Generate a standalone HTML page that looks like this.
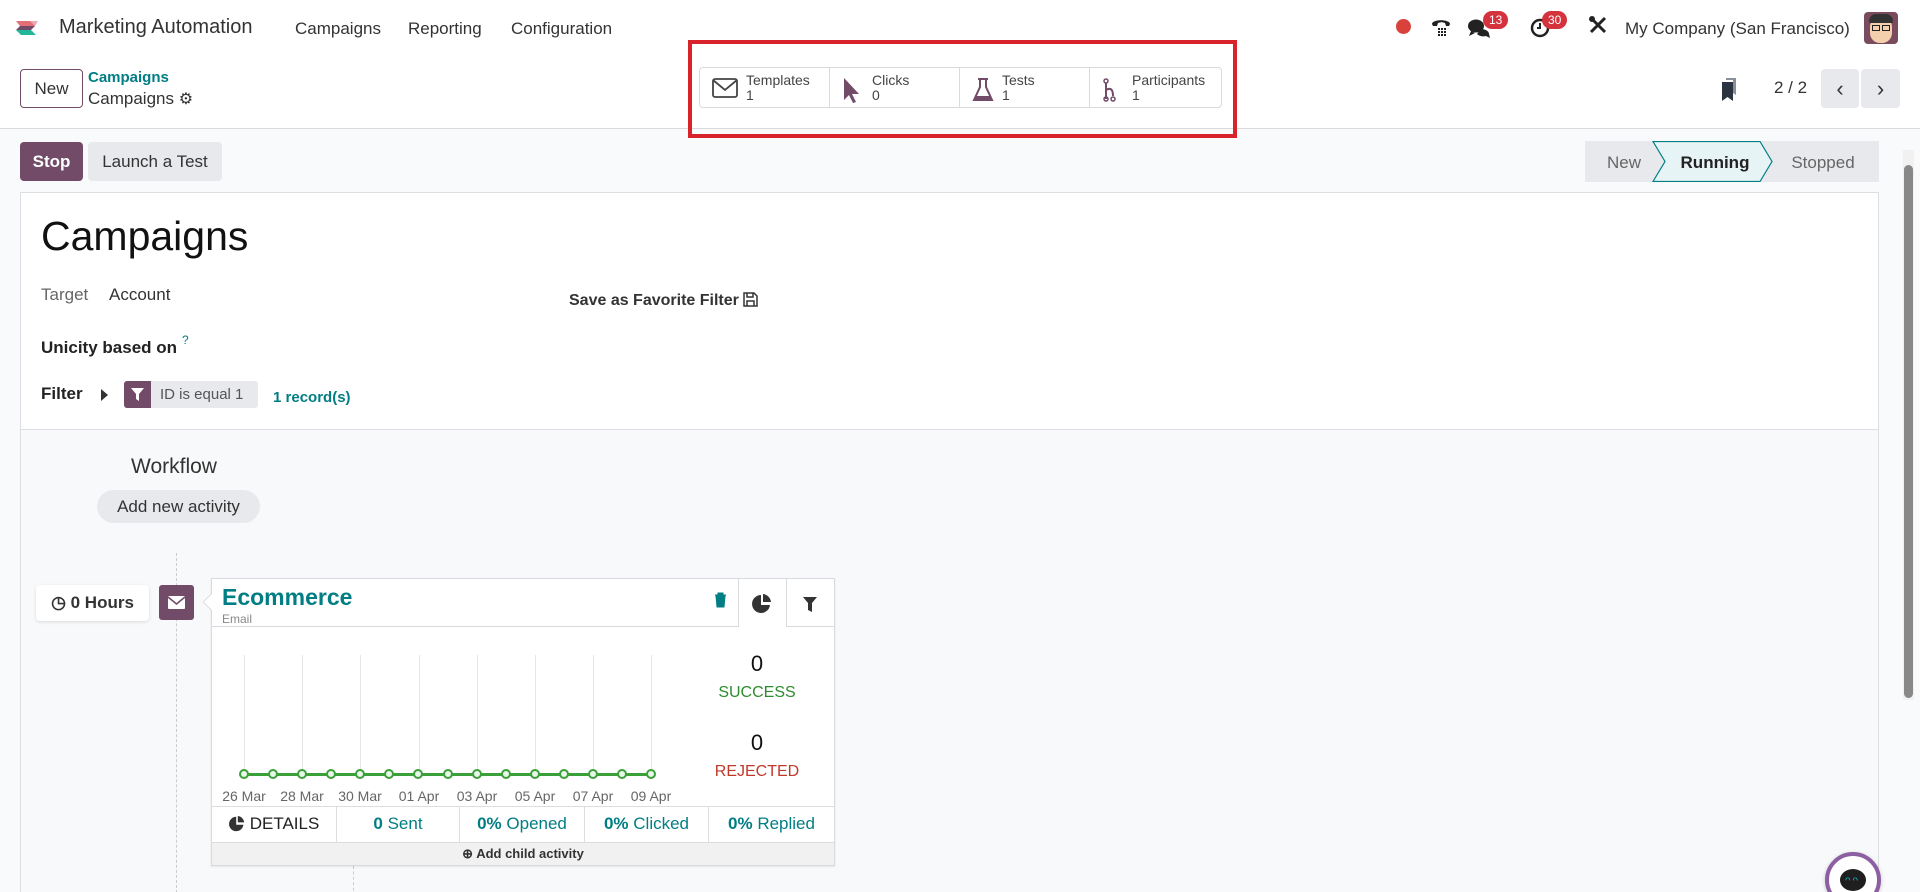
<!DOCTYPE html>
<html style="width:1920px;height:892px;overflow:hidden"><head><meta charset="utf-8"><style>
*{box-sizing:border-box;margin:0;padding:0}
body{width:1920px;height:892px;overflow:hidden;background:#f9fafb;font-family:"Liberation Sans",sans-serif;color:#212529;position:relative;font-size:16px}
.a{position:absolute;white-space:nowrap}
.top{position:absolute;left:0;top:0;width:1920px;height:129px;background:#fff;border-bottom:1px solid #d8dadd}
.teal{color:#017e84}
.btn{position:absolute;border-radius:4px;display:flex;align-items:center;justify-content:center;font-size:17px}
.stat{position:absolute;top:67px;height:41px;width:131px;border:1px solid #d8dadd;background:#fff;font-size:14px;line-height:15px;color:#444}
.stat svg{position:absolute;left:12px;top:10px}
.stat span{position:absolute;left:46px;top:5px}
.vl{position:absolute;top:655px;width:1px;height:119px;background:#e6e6e6}
.dt{position:absolute;top:788px;font-size:14px;color:#666;width:60px;text-align:center}
.dot{position:absolute;top:769px;width:10px;height:10px;border-radius:50%;border:2px solid #3aa03a;background:#e9f6e9}
.cell{position:absolute;top:806px;height:36px;border-right:1px solid #ddd;display:flex;align-items:center;justify-content:center;font-size:17px;color:#017e84}
</style></head><body>
<div class="top"></div>
<svg class="a" style="left:14px;top:17px" width="28" height="22" viewBox="0 0 28 22"><path d="M2 4h14l5 5H6z" fill="#e46f78"/><path d="M6 9h15l-4 4H2z" fill="#714b67"/><path d="M2 13h15l5 5H7z" fill="#21b799"/><path d="M10 4h14l-3 5" fill="#e46f78" opacity=".6"/></svg>
<div class="a" style="left:59px;top:16px;font-size:20px;color:#333">Marketing Automation</div>
<div class="a" style="left:295px;top:19px;font-size:17px;color:#333">Campaigns</div>
<div class="a" style="left:408px;top:19px;font-size:17px;color:#333">Reporting</div>
<div class="a" style="left:511px;top:19px;font-size:17px;color:#333">Configuration</div>
<div class="a" style="left:1396px;top:19px;width:15px;height:15px;border-radius:50%;background:#d9423b"></div>
<svg class="a" style="left:1430px;top:16px" width="22" height="22" viewBox="0 0 22 22"><path d="M2 8c0-5 18-5 18 0l-1 2h-3l-1-3c-3-1-4-1-7 0l-1 3H3z" fill="#222"/><g fill="#222"><rect x="8" y="12" width="2" height="2"/><rect x="11" y="12" width="2" height="2"/><rect x="14" y="12" width="2" height="2"/><rect x="8" y="15" width="2" height="2"/><rect x="11" y="15" width="2" height="2"/><rect x="14" y="15" width="2" height="2"/><rect x="8" y="18" width="2" height="2"/><rect x="11" y="18" width="2" height="2"/><rect x="14" y="18" width="2" height="2"/></g></svg>
<svg class="a" style="left:1467px;top:17px" width="24" height="22" viewBox="0 0 24 22"><ellipse cx="9" cy="9" rx="8" ry="6.5" fill="#222"/><path d="M4 14l-2 5 6-3z" fill="#222"/><path d="M14 12c4 0 8 2 8 5l1 4-4-2c-3 1-7 0-9-2" fill="#222"/></svg>
<div class="a" style="left:1483px;top:11px;background:#d4323c;color:#fff;font-size:12px;border-radius:10px;padding:2px 6px">13</div>
<svg class="a" style="left:1529px;top:16px" width="22" height="22" viewBox="0 0 22 22"><circle cx="11" cy="12" r="8" fill="none" stroke="#222" stroke-width="2.5"/><path d="M11 7v5h-3" stroke="#222" stroke-width="2" fill="none"/></svg>
<div class="a" style="left:1542px;top:11px;background:#d4323c;color:#fff;font-size:12px;border-radius:10px;padding:2px 6px">30</div>
<svg class="a" style="left:1588px;top:15px" width="20" height="20" viewBox="0 0 20 20"><path d="M3 3l14 14M17 3L3 17" stroke="#222" stroke-width="3"/><circle cx="4" cy="4" r="3" fill="#222"/></svg>
<div class="a" style="left:1625px;top:19px;font-size:17px;color:#333">My Company (San Francisco)</div>
<div class="a" style="left:1864px;top:12px;width:34px;height:32px;border-radius:4px;background:#7a4a5e;overflow:hidden"><div style="position:absolute;left:6px;top:5px;width:22px;height:26px;border-radius:10px;background:#f3cfae"></div><div style="position:absolute;left:5px;top:2px;width:24px;height:9px;background:#333;border-radius:8px 8px 2px 2px"></div><div style="position:absolute;left:8px;top:13px;width:8px;height:6px;border:1.5px solid #222"></div><div style="position:absolute;left:18px;top:13px;width:8px;height:6px;border:1.5px solid #222"></div></div>

<div class="btn" style="left:20px;top:69px;width:63px;height:39px;border:1px solid #714b67;background:#fff;color:#333">New</div>
<div class="a teal" style="left:88px;top:69px;font-size:15px;font-weight:bold">Campaigns</div>
<div class="a" style="left:88px;top:89px;font-size:17px;color:#333">Campaigns <span style="font-size:16px">⚙</span></div>

<div class="stat" style="left:699px;border-radius:4px 0 0 4px"><svg width="26" height="20" viewBox="0 0 26 20"><rect x="1" y="1" width="24" height="18" rx="2" fill="none" stroke="#444" stroke-width="1.8"/><path d="M1 2l12 10L25 2" fill="none" stroke="#444" stroke-width="1.8"/></svg><span>Templates<br>1</span></div>
<div class="stat" style="left:829px"><svg width="20" height="26" viewBox="0 0 20 26"><path d="M2 0v22l5-5 4 8 3-1-4-8h7z" fill="#714b67"/></svg><span style="left:42px">Clicks<br>0</span></div>
<div class="stat" style="left:959px"><svg width="22" height="24" viewBox="0 0 22 24"><path d="M6 1h10M8 1v8L2 22h18L14 9V1" fill="none" stroke="#714b67" stroke-width="2"/><path d="M4 18h14l2 4H2z" fill="#714b67"/></svg><span style="left:42px">Tests<br>1</span></div>
<div class="stat" style="left:1089px;width:133px;border-radius:0 4px 4px 0"><svg width="16" height="24" viewBox="0 0 16 24"><circle cx="4" cy="3" r="2" fill="none" stroke="#714b67" stroke-width="1.5"/><path d="M4 5v16M4 12c5-3 7 0 7 6" fill="none" stroke="#714b67" stroke-width="2"/><circle cx="4" cy="21" r="2" fill="none" stroke="#714b67" stroke-width="1.5"/><circle cx="11" cy="21" r="2" fill="none" stroke="#714b67" stroke-width="1.5"/></svg><span style="left:42px">Participants<br>1</span></div>
<div class="a" style="left:688px;top:40px;width:549px;height:98px;border:4px solid #d8232a"></div>

<svg class="a" style="left:1720px;top:78px" width="18" height="24" viewBox="0 0 18 24"><path d="M2 4h11v19l-5.5-4L2 23z" fill="#2b3440"/><path d="M6 0h10v17l-3-2V2H6z" fill="#8a9099"/></svg>
<div class="a" style="left:1774px;top:78px;font-size:17px;color:#333">2 / 2</div>
<div class="btn" style="left:1821px;top:69px;width:38px;height:39px;background:#e7e9ed;font-size:22px;color:#333">‹</div>
<div class="btn" style="left:1861px;top:69px;width:39px;height:39px;background:#e7e9ed;font-size:22px;color:#333">›</div>

<div class="btn" style="left:20px;top:142px;width:63px;height:39px;background:#714b67;color:#fff;font-weight:bold">Stop</div>
<div class="btn" style="left:88px;top:142px;width:134px;height:39px;background:#e7e9ed;color:#333">Launch a Test</div>

<svg class="a" style="left:1585px;top:141px" width="294" height="41" viewBox="0 0 294 41"><rect width="294" height="41" fill="#e7e9ed"/><path d="M68 0.5h107l12 20-12 20H68l12-20z" fill="#e6f4f5" stroke="#017e84" stroke-width="1.2"/><text x="39" y="27" text-anchor="middle" font-family="Liberation Sans" font-size="17" fill="#666">New</text><text x="130" y="27" text-anchor="middle" font-family="Liberation Sans" font-size="17" font-weight="bold" fill="#222">Running</text><text x="238" y="27" text-anchor="middle" font-family="Liberation Sans" font-size="17" fill="#666">Stopped</text></svg>

<div class="a" style="left:1903px;top:150px;width:11px;height:550px;background:#f1f1f1"></div>
<div class="a" style="left:1904px;top:165px;width:9px;height:533px;background:#888;border-radius:5px"></div>

<div class="a" style="left:20px;top:192px;width:1859px;height:700px;border:1px solid #dcdee1;border-bottom:0;background:#f8f9fa"></div>
<div class="a" style="left:21px;top:193px;width:1857px;height:237px;background:#fff;border-bottom:1px solid #dcdee1"></div>
<div class="a" style="left:41px;top:213px;font-size:41px;color:#111">Campaigns</div>
<div class="a" style="left:41px;top:285px;font-size:17px;color:#666">Target</div>
<div class="a" style="left:109px;top:285px;font-size:17px;color:#333">Account</div>
<div class="a" style="left:569px;top:292px;font-size:16px;font-weight:bold;color:#333">Save as Favorite Filter <svg width="15" height="15" viewBox="0 0 15 15" style="vertical-align:-2px"><path d="M1 1h10l3 3v10H1z M4 1v4h6V1 M4 9h7v5H4z" fill="none" stroke="#333" stroke-width="1.5"/></svg></div>
<div class="a" style="left:41px;top:338px;font-size:17px;font-weight:bold;color:#222">Unicity based on</div>
<div class="a teal" style="left:182px;top:333px;font-size:12px">?</div>
<div class="a" style="left:41px;top:384px;font-size:17px;font-weight:bold;color:#222">Filter</div>
<div class="a" style="left:101px;top:389px;width:0;height:0;border-left:7px solid #333;border-top:6px solid transparent;border-bottom:6px solid transparent"></div>
<div class="a" style="left:124px;top:381px;width:134px;height:27px;background:#e7e9ed;border-radius:3px"></div>
<div class="a" style="left:124px;top:381px;width:27px;height:27px;background:#714b67;border-radius:3px 0 0 3px"><svg width="27" height="27" viewBox="0 0 27 27"><path d="M7 7h13l-5 6v7l-3-2v-5z" fill="#fff"/></svg></div>
<div class="a" style="left:160px;top:386px;font-size:15px;color:#555">ID is equal 1</div>
<div class="a teal" style="left:273px;top:389px;font-size:15px;font-weight:bold">1 record(s)</div>

<div class="a" style="left:131px;top:455px;font-size:21px;color:#333">Workflow</div>
<div class="btn" style="left:97px;top:490px;width:163px;height:33px;border-radius:17px;background:#e7e9ed;color:#333">Add new activity</div>

<div class="a" style="left:176px;top:553px;height:340px;border-left:1px dashed #ccc"></div>
<div class="a" style="left:353px;top:866px;height:30px;border-left:1px dashed #ccc"></div>

<div class="btn" style="left:36px;top:585px;width:113px;height:36px;background:#fff;box-shadow:0 1px 3px rgba(0,0,0,.12);font-weight:bold;color:#333">◷ 0 Hours</div>
<div class="a" style="left:159px;top:585px;width:35px;height:35px;background:#714b67;border-radius:3px"><svg width="35" height="35" viewBox="0 0 35 35"><rect x="9" y="11" width="17" height="13" rx="1" fill="#fff"/><path d="M9 12l8.5 7 8.5-7" fill="none" stroke="#714b67" stroke-width="1.6"/></svg></div>

<div class="a" style="left:211px;top:578px;width:624px;height:288px;background:#fff;border:1px solid #d8dadd;box-shadow:0 1px 2px rgba(0,0,0,.08)"></div>
<div class="a" style="left:205px;top:596px;width:12px;height:12px;background:#fff;border-left:1px solid #ddd;border-bottom:1px solid #ddd;transform:rotate(45deg)"></div>
<div class="a" style="left:212px;top:626px;width:526px;height:1px;background:#d8dadd"></div>
<div class="a" style="left:786px;top:626px;width:49px;height:1px;background:#d8dadd"></div>
<div class="a" style="left:738px;top:579px;width:1px;height:48px;background:#d8dadd"></div>
<div class="a" style="left:786px;top:579px;width:1px;height:48px;background:#d8dadd"></div>
<div class="a teal" style="left:222px;top:584px;font-size:23px;font-weight:bold">Ecommerce</div>
<div class="a" style="left:222px;top:612px;font-size:12px;color:#888">Email</div>
<svg class="a" style="left:714px;top:592px" width="13" height="16" viewBox="0 0 13 16"><path d="M1 3h11M4 3V1h5v2M2 4h9l-1 11H3z" fill="#017e84" stroke="#017e84" stroke-width="1"/></svg>
<svg class="a" style="left:752px;top:594px" width="20" height="20" viewBox="0 0 20 20"><path d="M9 1a9 9 0 1 0 9 10H9z" fill="#333"/><path d="M11 0v8h8a9 9 0 0 0-8-8z" fill="#333"/></svg>
<svg class="a" style="left:802px;top:596px" width="16" height="17" viewBox="0 0 16 17"><path d="M1 1h14l-5 6v9l-4-2V7z" fill="#333"/></svg>

<div class="vl" style="left:244px"></div><div class="vl" style="left:302px"></div><div class="vl" style="left:360px"></div><div class="vl" style="left:419px"></div><div class="vl" style="left:477px"></div><div class="vl" style="left:535px"></div><div class="vl" style="left:593px"></div><div class="vl" style="left:651px"></div>
<div class="a" style="left:244px;top:773px;width:407px;height:3px;background:#3aa03a"></div>
<div class="dot" style="left:239px"></div><div class="dot" style="left:268px"></div><div class="dot" style="left:297px"></div><div class="dot" style="left:326px"></div><div class="dot" style="left:355px"></div><div class="dot" style="left:384px"></div><div class="dot" style="left:413px"></div><div class="dot" style="left:443px"></div><div class="dot" style="left:472px"></div><div class="dot" style="left:501px"></div><div class="dot" style="left:530px"></div><div class="dot" style="left:559px"></div><div class="dot" style="left:588px"></div><div class="dot" style="left:617px"></div><div class="dot" style="left:646px"></div>
<div class="dt" style="left:214px">26 Mar</div><div class="dt" style="left:272px">28 Mar</div><div class="dt" style="left:330px">30 Mar</div><div class="dt" style="left:389px">01 Apr</div><div class="dt" style="left:447px">03 Apr</div><div class="dt" style="left:505px">05 Apr</div><div class="dt" style="left:563px">07 Apr</div><div class="dt" style="left:621px">09 Apr</div>

<div class="a" style="left:697px;top:651px;width:120px;text-align:center;font-size:22px;color:#111">0</div>
<div class="a" style="left:697px;top:684px;width:120px;text-align:center;font-size:16px;color:#2e8b2e">SUCCESS</div>
<div class="a" style="left:697px;top:730px;width:120px;text-align:center;font-size:22px;color:#111">0</div>
<div class="a" style="left:697px;top:763px;width:120px;text-align:center;font-size:16px;color:#c0392b">REJECTED</div>

<div class="a" style="left:212px;top:806px;width:622px;height:1px;background:#ddd"></div>
<div class="cell" style="left:212px;width:125px;color:#222"><svg width="16" height="16" viewBox="0 0 20 20" style="margin-right:5px"><path d="M9 1a9 9 0 1 0 9 10H9z" fill="#333"/><path d="M11 0v8h8a9 9 0 0 0-8-8z" fill="#333"/></svg>DETAILS</div>
<div class="cell" style="left:337px;width:123px"><b>0</b>&nbsp;Sent</div>
<div class="cell" style="left:460px;width:125px"><b>0%</b>&nbsp;Opened</div>
<div class="cell" style="left:585px;width:124px"><b>0%</b>&nbsp;Clicked</div>
<div class="cell" style="left:709px;width:125px;border-right:0"><b>0%</b>&nbsp;Replied</div>
<div class="a" style="left:212px;top:842px;width:622px;height:23px;background:#f1f1f2;border-top:1px solid #ddd;text-align:center;font-size:13px;font-weight:bold;color:#333;line-height:22px">⊕ Add child activity</div>

<div class="a" style="left:1825px;top:852px;width:56px;height:56px;border-radius:50%;background:#fff;border:4px solid #8e5ea2;box-shadow:0 1px 4px rgba(0,0,0,.2)"><div style="position:absolute;left:11px;top:13px;width:26px;height:22px;border-radius:50%;background:#1f1f1f"></div><div style="position:absolute;left:16px;top:19px;color:#1ab;font-size:10px;letter-spacing:2px">ᴖᴖ</div></div>
</body></html>
